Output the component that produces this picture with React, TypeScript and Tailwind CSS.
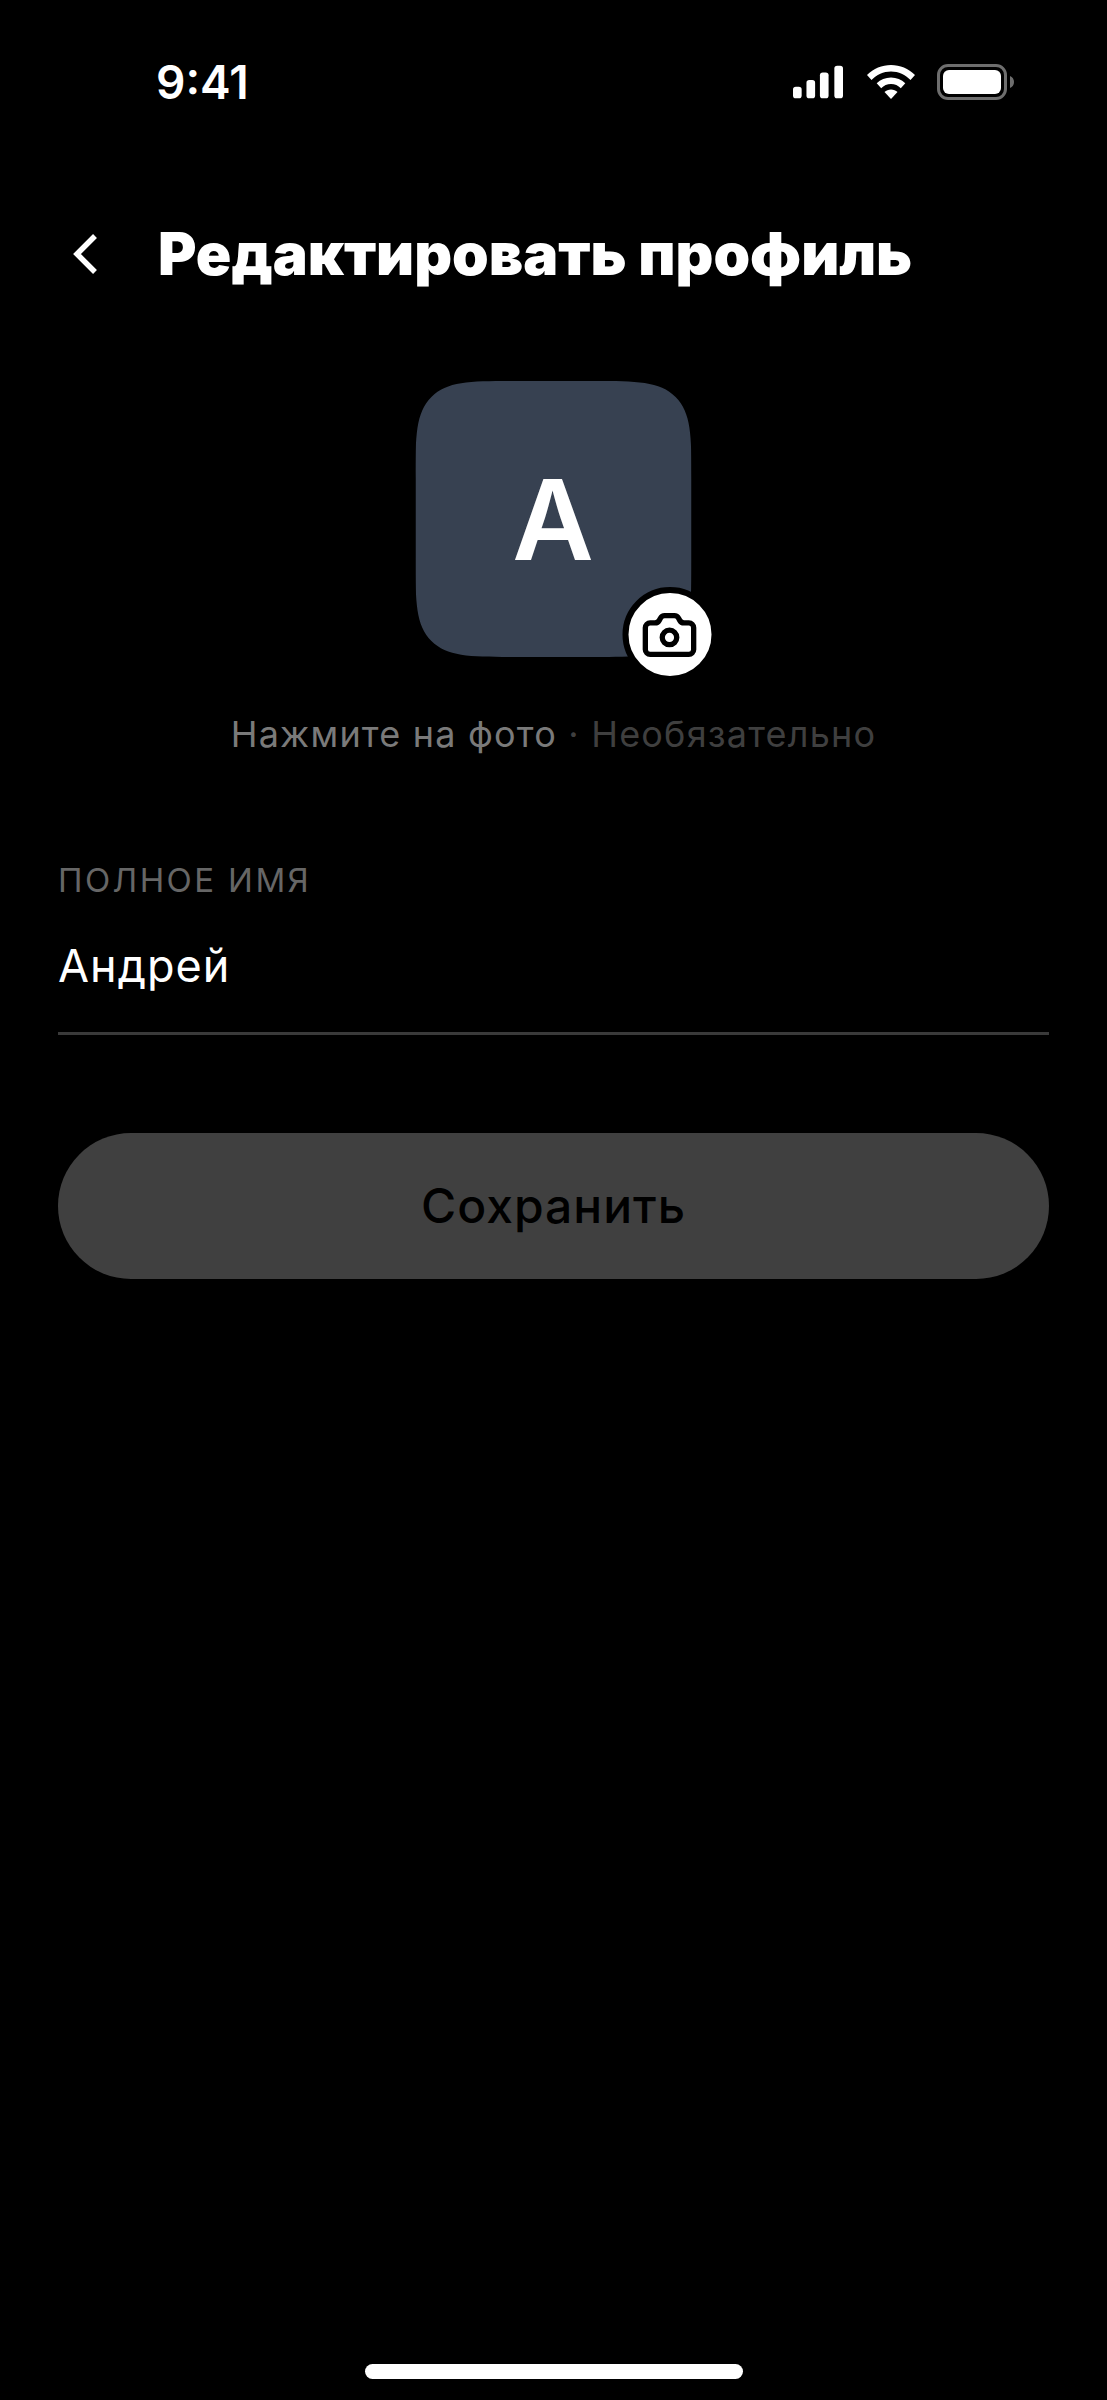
import { Camera } from 'lucide-react';

function StatusBar() {
  return (
    <div className="flex items-center justify-between h-[56px] mt-[54px] pl-[156px] pr-[93px]">
      <span className="text-[46px] leading-none font-semibold text-white">9:41</span>
      <div className="flex items-center gap-[23px]">
        {/* cell bars */}
        <svg width="50" height="34" viewBox="0 0 52 34" fill="white">
          <rect x="0" y="22" width="9" height="12" rx="3" />
          <rect x="14" y="15" width="9" height="19" rx="3" />
          <rect x="28" y="7" width="9" height="27" rx="3" />
          <rect x="43" y="0" width="9" height="34" rx="3" />
        </svg>
        {/* wifi */}
        <svg width="50" height="34" viewBox="0 0 48 34" fill="white">
          <path d="M24 0C33 0 41.500 3.500 48 10L43.500 15C38.500 9.800 31.500 6.500 24 6.500C16.500 6.500 9.500 9.800 4.500 15L0 10C6.500 3.500 15 0 24 0Z" />
          <path d="M24 12.500C29.500 12.500 34.500 14.700 38.300 18.300L33.800 23.200C31.200 20.600 27.800 19 24 19C20.200 19 16.800 20.600 14.200 23.200L9.700 18.300C13.500 14.700 18.500 12.500 24 12.500Z" />
          <path d="M24 24.500C26.500 24.500 28.800 25.500 30.500 27.100L24 34L17.500 27.100C19.200 25.500 21.500 24.500 24 24.500Z" />
        </svg>
        <div className="flex items-center gap-[3px] -ml-[2px]">
          <div className="w-[70px] h-[36px] rounded-[11px] border-[3px] border-[#6e6e6e] p-[3px]">
            <div className="w-full h-full rounded-[6px] bg-white" />
          </div>
          <svg width="4" height="12" viewBox="0 0 4 12" fill="#6e6e6e">
            <path d="M0 0C2.500 1 4 3.200 4 6C4 8.800 2.500 11 0 12Z" />
          </svg>
        </div>
      </div>
    </div>
  );
}

export default function App() {
  return (
    <div className="flex flex-col h-[2400px] w-[1107px] bg-black overflow-hidden font-['Inter',sans-serif]">
      <StatusBar />

      {/* Header */}
      <div className="flex items-center h-[80px] mt-[104px] pl-[70px]">
        <svg width="34" height="44" viewBox="0 0 34 44" fill="none" stroke="white" strokeWidth="5.500">
          <path d="M25 4L7 22L25 40" />
        </svg>
        <h1 className="ml-[54px] text-[58.700px] leading-none font-black text-white whitespace-nowrap">Редактировать профиль</h1>
      </div>

      {/* Avatar */}
      <div className="flex flex-col items-center mt-[87px]">
        <div className="relative w-[276px] h-[276px] -translate-x-[0.500px]">
          <div className="flex items-center justify-center w-full h-full rounded-[100px] [corner-shape:squircle] bg-[#374151]">
            <span className="text-[112px] leading-none font-semibold text-white">А</span>
          </div>
          <div className="absolute left-[207px] top-[206px] flex items-center justify-center w-[95px] h-[95px] rounded-full bg-white border-[6px] border-black">
            <Camera size={58} strokeWidth={2.200} color="black" />
          </div>
        </div>
        <p className="mt-[55px] text-[36px] leading-[44px] tracking-[1.200px] whitespace-nowrap">
          <span className="text-[#7a7a7a]">Нажмите на фото</span>
          <span className="text-[#3f3f3f]"> · Необязательно</span>
        </p>
      </div>

      {/* Form */}
      <div className="flex flex-col mt-[104px] px-[58px]">
        <label className="text-[33px] leading-[40px] tracking-[2.400px] text-[#666666]">ПОЛНОЕ ИМЯ</label>
        <div className="mt-[38px] h-[97px] border-b-[3px] border-[#3a3a3a] text-[45px] leading-[56px] tracking-[1px] text-white">Андрей</div>
        <button className="mt-[98px] h-[146px] rounded-full bg-[#404040] text-[48px] font-medium tracking-[1px] text-black">Сохранить</button>
      </div>

      {/* Home indicator */}
      <div className="mt-auto mb-[21px] mx-auto w-[378px] h-[15px] rounded-full bg-white" />
    </div>
  );
}
